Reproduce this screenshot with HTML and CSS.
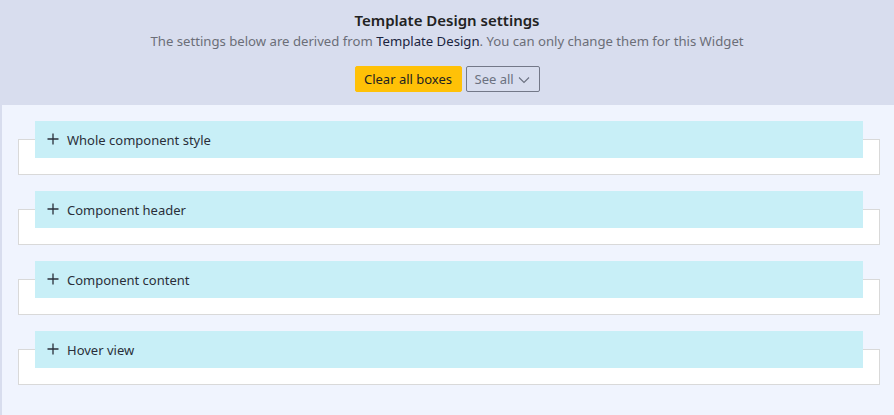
FILE: index.html
```html
<!DOCTYPE html>
<html>
<head>
<meta charset="utf-8">
<link rel="stylesheet" href="styles.css">
</head>
<body>
<div class="page">
  <header class="top">
    <h1 class="title">Template Design settings</h1>
    <p class="sub">The settings below are derived from <span class="link">Template Design</span>. You can only change them for this Widget</p>
    <div class="actions">
      <button class="btn btn-clear">Clear all boxes</button>
      <button class="btn btn-see">See all <svg class="chev" width="12" height="8" viewBox="0 0 12 8"><path d="M1 1.5 L6 6.5 L11 1.5" fill="none" stroke="#6b7180" stroke-width="1.1"/></svg></button>
    </div>
  </header>
  <main class="panel">
    <section class="group">
      <div class="group-head"><svg class="plus" width="12" height="12" viewBox="0 0 12 12"><path d="M6 0.5 V11.5 M0.5 6 H11.5" stroke="#2a2f3a" stroke-width="1.3"/></svg>Whole component style</div>
    </section>
    <section class="group">
      <div class="group-head"><svg class="plus" width="12" height="12" viewBox="0 0 12 12"><path d="M6 0.5 V11.5 M0.5 6 H11.5" stroke="#2a2f3a" stroke-width="1.3"/></svg>Component header</div>
    </section>
    <section class="group">
      <div class="group-head"><svg class="plus" width="12" height="12" viewBox="0 0 12 12"><path d="M6 0.5 V11.5 M0.5 6 H11.5" stroke="#2a2f3a" stroke-width="1.3"/></svg>Component content</div>
    </section>
    <section class="group">
      <div class="group-head"><svg class="plus" width="12" height="12" viewBox="0 0 12 12"><path d="M6 0.5 V11.5 M0.5 6 H11.5" stroke="#2a2f3a" stroke-width="1.3"/></svg>Hover view</div>
    </section>
  </main>
</div>
</body>
</html>
```

FILE: styles.css
```css
html, body {
  margin: 0;
  padding: 0;
}
body {
  background: #d8ddee;
  font-family: "Segoe UI", "Noto Sans", "Open Sans", sans-serif;
  width: 894px;
  height: 415px;
  overflow: hidden;
}
.page {
  display: flex;
  flex-direction: column;
  height: 415px;
}
.top {
  height: 105px;
  box-sizing: border-box;
  padding-top: 9px;
  text-align: center;
}
.title {
  margin: 0;
  font-size: 15px;
  font-weight: 600;
  color: #222;
  line-height: 22px;
}
.sub {
  margin: 0;
  font-size: 13.15px;
  color: #6b6e78;
  line-height: 20px;
}
.link {
  color: #1b2440;
}
.actions {
  display: flex;
  justify-content: center;
  gap: 4px;
  margin-top: 15px;
}
.btn {
  font-family: inherit;
  font-size: 13px;
  height: 26px;
  box-sizing: border-box;
  border-radius: 2px;
  padding: 0 8px;
  cursor: pointer;
  display: flex;
  align-items: center;
  white-space: nowrap;
}
.btn-clear {
  background: #ffc107;
  border: 1px solid #ffc107;
  color: #222;
  width: 107px;
  justify-content: center;
}
.btn-see {
  background: transparent;
  border: 1px solid #737888;
  color: #6b7180;
  width: 74px;
  padding: 0 0 0 8px;
  gap: 4px;
}
.chev {
  margin-top: 1px;
}
.panel {
  flex: 1;
  margin-left: 2px;
  background: #f0f4fe;
  padding: 16px 14px 0 16px;
  display: flex;
  flex-direction: column;
  gap: 16px;
}
.group {
  position: relative;
  margin-top: 18px;
  height: 36px;
  background: #fff;
  border: 1px solid #d9d9d9;
  box-sizing: border-box;
}
.group-head {
  position: absolute;
  left: 16px;
  right: 16px;
  top: -19px;
  height: 37px;
  background: #c8eff7;
  display: flex;
  align-items: center;
  padding-left: 12px;
  font-size: 13px;
  color: #2a2f3a;
}
.plus {
  margin-right: 8px;
  position: relative;
  top: -1px;
}
```
